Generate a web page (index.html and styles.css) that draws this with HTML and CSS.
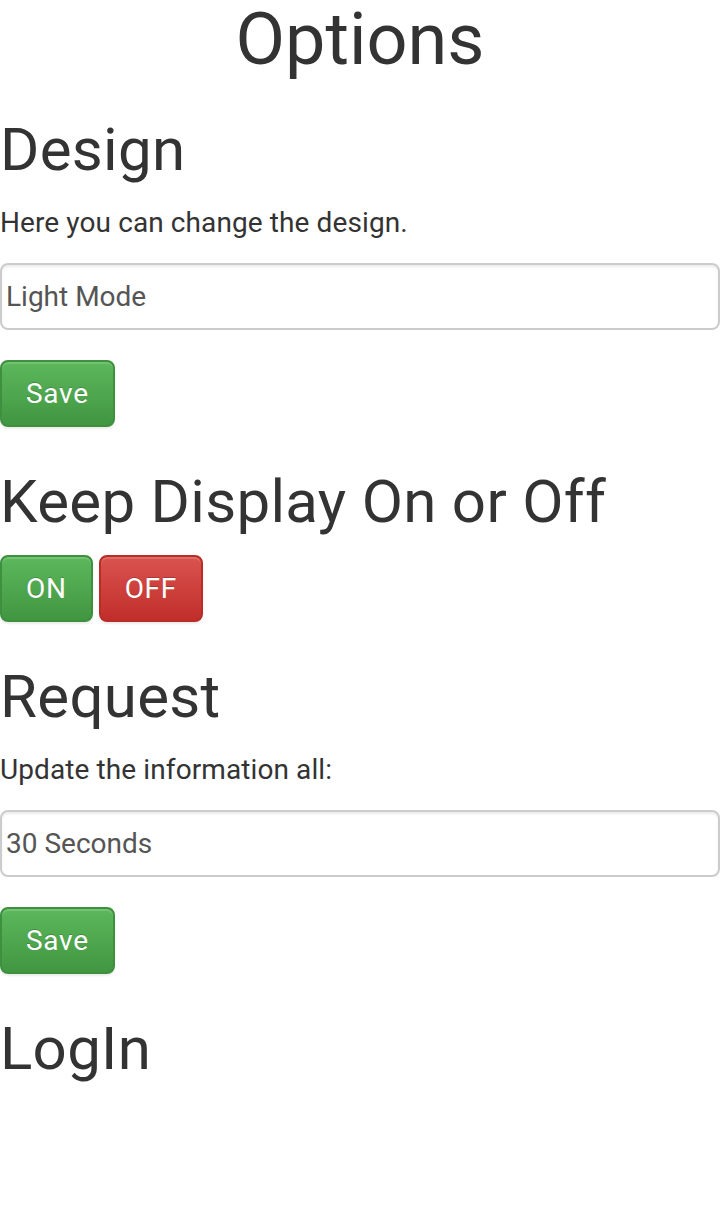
FILE: index.html
```html
<!DOCTYPE html>
<html lang="en">
<head>
  <meta charset="UTF-8">
  <title>Options</title>
  <link rel="stylesheet" href="styles.css">
</head>
<body>
  <h1 class="page-title">Options</h1>

  <section class="block">
    <h2>Design</h2>
    <p>Here you can change the design.</p>
    <div class="form-group">
      <select class="form-control">
        <option>Light Mode</option>
        <option>Dark Mode</option>
      </select>
    </div>
    <button class="btn btn-success">Save</button>
  </section>

  <section class="block">
    <h2>Keep Display On or Off</h2>
    <div class="btn-row">
      <button class="btn btn-success">ON</button>
      <button class="btn btn-danger">OFF</button>
    </div>
  </section>

  <section class="block">
    <h2>Request</h2>
    <p>Update the information all:</p>
    <div class="form-group">
      <select class="form-control">
        <option>30 Seconds</option>
        <option>60 Seconds</option>
      </select>
    </div>
    <button class="btn btn-success">Save</button>
  </section>

  <section class="block">
    <h2>LogIn</h2>
    <div class="login-box"></div>
    <h2 class="next-title">Uninstall all</h2>
  </section>
</body>
</html>
```

FILE: styles.css
```css
body {
  margin: 0;
  padding: 0;
  font-family: Roboto, "Liberation Sans", sans-serif;
  font-size: 28px;
  line-height: 40px;
  color: #333;
  background: #fff;
}

h1, h2 {
  font-weight: 400;
  line-height: 1.1;
  margin: 0;
}

.page-title {
  font-size: 72px;
  text-align: center;
}

h2 {
  font-size: 60px;
  margin-bottom: 20px;
  letter-spacing: 0.3px;
}

.block {
  margin-top: 38px;
}

.block + .block {
  margin-top: 42px;
}

p {
  margin: 0 0 20px;
  letter-spacing: 0.1px;
}

.form-group {
  margin-bottom: 30px;
}

.form-control {
  display: block;
  width: 100%;
  height: 67px;
  padding: 0 4px;
  font-family: inherit;
  font-size: 28px;
  color: #555;
  background: #fff;
  border: 2px solid #ccc;
  border-radius: 8px;
  box-shadow: inset 0 2px 2px rgba(0, 0, 0, 0.075);
  box-sizing: border-box;
  appearance: none;
  -webkit-appearance: none;
}

.btn {
  display: inline-block;
  height: 67px;
  padding: 0 24px;
  font-family: inherit;
  font-size: 28px;
  letter-spacing: 0.7px;
  color: #fff;
  border-radius: 8px;
  border: 2px solid transparent;
  box-sizing: border-box;
  text-shadow: 0 -1px 0 rgba(0, 0, 0, 0.2);
  box-shadow: inset 0 2px 0 rgba(255, 255, 255, 0.15), 0 2px 2px rgba(0, 0, 0, 0.075);
  cursor: pointer;
  vertical-align: top;
}

.btn-success {
  background: linear-gradient(to bottom, #5cb85c 0%, #419641 100%);
  border-color: #3e8f3e;
}

.btn-danger {
  background: linear-gradient(to bottom, #d9534f 0%, #c12e2a 100%);
  border-color: #b92c28;
}

.btn-row {
  display: flex;
  gap: 6px;
}

.login-box {
  height: 91px;
}

.next-title {
  margin-top: 40px;
}
```
